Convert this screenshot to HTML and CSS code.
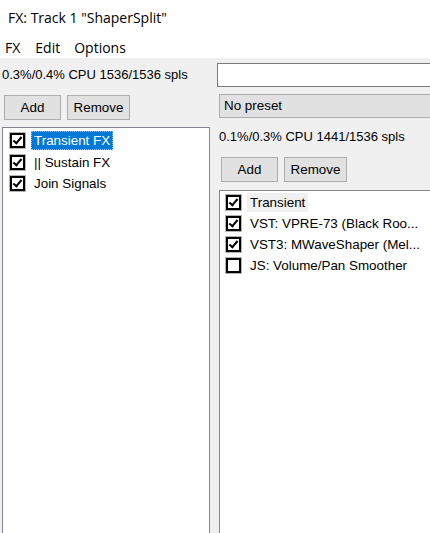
FILE: index.html
```html
<!DOCTYPE html>
<html>
<head>
	<title>FX: Track 1 "ShaperSplit"</title>
	<link rel="stylesheet" href="styles.css">
</head>
<body>
	<header class="titlebar">FX: Track 1 "ShaperSplit"</header>

	<nav class="menubar">
		<span class="menu-item">FX</span>
		<span class="menu-item">Edit</span>
		<span class="menu-item">Options</span>
	</nav>

	<main class="window">
		<!-- chain on the left -->
		<section class="pane pane-left">
			<div class="cpu">0.3%/0.4% CPU 1536/1536 spls</div>
			<div class="buttons">
				<button class="btn btn-add">Add</button>
				<button class="btn btn-remove">Remove</button>
			</div>
			<ul class="fx-list">
				<li class="fx-row"><span class="check on"></span><span class="fx-name selected">Transient FX</span></li>
				<li class="fx-row"><span class="check on"></span><span class="fx-name">|| Sustain FX</span></li>
				<li class="fx-row"><span class="check on"></span><span class="fx-name">Join Signals</span></li>
			</ul>
		</section>

		<!-- container contents on the right -->
		<section class="pane pane-right">
			<div class="param-box"></div>
			<div class="preset">No preset</div>
			<div class="cpu cpu-right">0.1%/0.3% CPU 1441/1536 spls</div>
			<div class="buttons">
				<button class="btn btn-add">Add</button>
				<button class="btn btn-remove">Remove</button>
			</div>
			<ul class="fx-list fx-list-right">
				<li class="fx-row"><span class="check on"></span><span class="fx-name hover">Transient</span></li>
				<li class="fx-row"><span class="check on"></span><span class="fx-name">VST: VPRE-73 (Black Roo...</span></li>
				<li class="fx-row"><span class="check on"></span><span class="fx-name">VST3: MWaveShaper (Mel...</span></li>
				<li class="fx-row"><span class="check"></span><span class="fx-name">JS: Volume/Pan Smoother</span></li>
			</ul>
		</section>
	</main>
</body>
</html>
```

FILE: styles.css
```css
/* page */
html, body {
  margin: 0;
  padding: 0;
}

body {
  width: 430px;
  height: 533px;
  overflow: hidden;
  background-color: #f0f0f0;
  font-family: "Liberation Sans", Arial, sans-serif;
  font-size: 13px;
  color: #000;
  display: flex;
  flex-direction: column;
}

/* title + menu */
.titlebar {
  background-color: #fff;
  height: 33px;
  line-height: 36px;
  padding-left: 8px;
  font-family: "Open Sans", "Noto Sans", sans-serif;
  font-size: 14px;
  color: #000;
}

.menubar {
  background-color: #fff;
  height: 25px;
  line-height: 29px;
  display: flex;
  font-family: "Open Sans", "Noto Sans", sans-serif;
  font-size: 14px;
}

.menu-item:nth-child(1) {
  margin-left: 5px;
}

.menu-item:nth-child(2) {
  margin-left: 15px;
}

.menu-item:nth-child(3) {
  margin-left: 14px;
}

/* window body */
.window {
  flex: 1;
  display: flex;
  min-height: 0;
}

.pane {
  display: flex;
  flex-direction: column;
  min-height: 0;
}

.pane-left {
  width: 217px;
}

.pane-right {
  flex: 1;
  min-width: 0;
}

.cpu {
  height: 16px;
  line-height: 16px;
  margin-top: 9px;
  padding-left: 2px;
  white-space: nowrap;
}

.cpu-right {
  margin-top: 11px;
}

/* buttons */
.buttons {
  display: flex;
  gap: 6px;
  margin-top: 12px;
  padding-left: 4px;
}

.btn {
  height: 25px;
  border: 1px solid #adadad;
  background-color: #e1e1e1;
  font-family: "Liberation Sans", Arial, sans-serif;
  font-size: 13.4px;
  color: #000;
  padding: 0;
}

.btn-add {
  width: 57px;
}

.btn-remove {
  width: 63px;
}

/* param box and preset on the right, they run off the right edge */
.param-box {
  margin-top: 5px;
  height: 22px;
  border: 1px solid #7a7a7a;
  border-right: none;
  background-color: #fff;
}

.preset {
  margin-top: 7px;
  margin-left: 2px;
  height: 24px;
  line-height: 22px;
  border: 1px solid #adadad;
  border-right: none;
  background-color: #e1e1e1;
  padding-left: 4px;
  box-sizing: border-box;
  font-size: 13.4px;
}

/* fx lists */
.fx-list {
  list-style: none;
  margin: 7px 0 0 2px;
  padding: 2px 0 0 0;
  width: 206px;
  flex: 1;
  border: 1px solid #828790;
  border-bottom: none;
  background-color: #fff;
  font-size: 13.4px;
}

.fx-list-right {
  margin-top: 8px;
  width: auto;
  padding-top: 1px;
  border-right: none;
}

.fx-row {
  height: 21.5px;
  display: flex;
  align-items: center;
  white-space: nowrap;
}

.fx-list-right .fx-row {
  height: 21px;
}

.check {
  width: 11px;
  height: 11px;
  margin-left: 7px;
  border: 2px solid #000;
  outline: 1px solid #b4b4b4;
  background-color: #fff;
  position: relative;
  flex: none;
}

.fx-list-right .check {
  margin-left: 6px;
}

.check.on::after {
  content: "";
  position: absolute;
  left: 3px;
  top: 0px;
  width: 3px;
  height: 7px;
  border-right: 2.5px solid #000;
  border-bottom: 2.5px solid #000;
  transform: rotate(40deg);
}

.fx-name {
  margin-left: 6px;
  padding: 1px 3px;
  line-height: 17px;
}

.fx-name.selected {
  background-color: #0078d7;
  color: #fff;
  outline: 1px dotted #8fc3f0;
  outline-offset: -1px;
}

.fx-name.hover {
  background-color: #f0f0f0;
}
```
